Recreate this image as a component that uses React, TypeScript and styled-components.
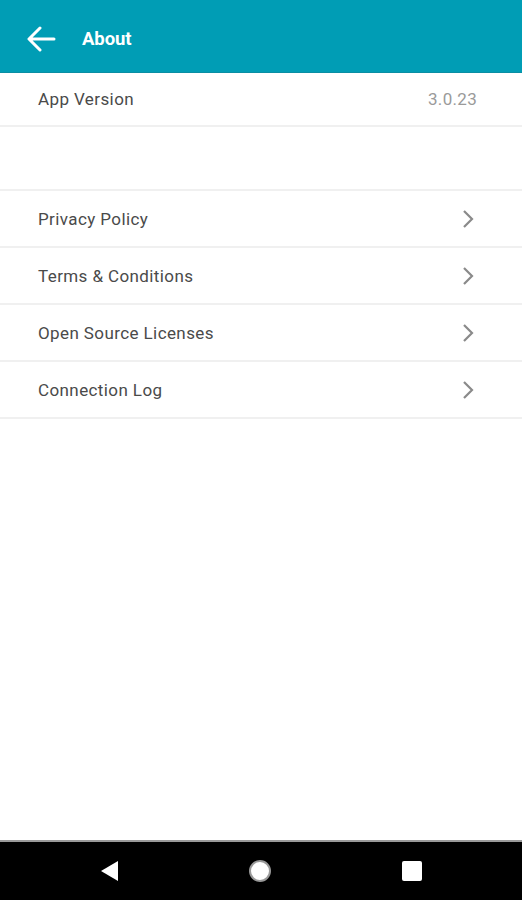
import React from "react";
import styled, { createGlobalStyle } from "styled-components";

const Global = createGlobalStyle`
  html, body { margin: 0; padding: 0; background: #fff; }
  body { font-family: Roboto, "Noto Sans", sans-serif; }
`;

const Screen = styled.div`
  width: 522px;
  height: 900px;
  display: flex;
  flex-direction: column;
  background: #fff;
`;

const AppBar = styled.header`
  height: 73px;
  background: #009db5;
  display: flex;
  align-items: center;
  padding: 5px 0 0 26px;
  box-sizing: border-box;
  border-bottom: 1px solid #0a8ea3;
`;

const BackButton = styled.div`
  width: 30px;
  height: 30px;
  display: flex;
  align-items: center;
  justify-content: center;
  margin-right: 26px;
`;

const Title = styled.h1`
  margin: 0;
  color: #fff;
  font-size: 18.5px;
  font-weight: 700;
  letter-spacing: -0.1px;
`;

const Content = styled.main`
  flex: 1;
  display: flex;
  flex-direction: column;
`;

const Row = styled.div<{ $h: number }>`
  height: ${(p) => p.$h}px;
  display: flex;
  align-items: center;
  justify-content: space-between;
  padding: 0 47px 0 38px;
  border-bottom: 2px solid #f0f0f0;
  box-sizing: border-box;
`;

const Label = styled.span`
  font-size: 17px;
  letter-spacing: 0.4px;
  color: #4a4a4a;
`;

const Value = styled.span`
  font-size: 17px;
  letter-spacing: 0.3px;
  color: #9a9a9a;
  margin-right: -2px;
`;

const Spacer = styled.div`
  height: 62px;
  border-bottom: 2px solid #f0f0f0;
`;

const NavBar = styled.nav`
  height: 60px;
  background: #000;
  border-top: 2px solid #9a9a9a;
  display: flex;
  align-items: center;
  gap: 130px;
  padding-left: 100px;
  box-sizing: border-box;
`;

const Chevron = () => (
  <svg width="14" height="20" viewBox="0 0 14 20">
    <path d="M3 2 L11 10 L3 18" fill="none" stroke="#8a8a8a" strokeWidth="2.2" />
  </svg>
);

const items = ["Privacy Policy", "Terms & Conditions", "Open Source Licenses", "Connection Log"];

export default function App() {
  return (
    <Screen>
      <Global />
      <AppBar>
        <BackButton>
          <svg width="30" height="26" viewBox="0 0 30 26">
            <path d="M28 13 H4 M14 2 L3 13 L14 24" fill="none" stroke="#fff" strokeWidth="3" strokeLinecap="round" strokeLinejoin="round" />
          </svg>
        </BackButton>
        <Title>About</Title>
      </AppBar>
      <Content>
        <Row $h={54}>
          <Label>App Version</Label>
          <Value>3.0.23</Value>
        </Row>
        <Spacer />
        {items.map((t) => (
          <Row key={t} $h={57}>
            <Label>{t}</Label>
            <Chevron />
          </Row>
        ))}
      </Content>
      <NavBar>
        <svg width="18" height="22" viewBox="0 0 18 22">
          <path d="M18 1 L18 21 L1 11 Z" fill="#fff" />
        </svg>
        <svg width="24" height="24" viewBox="0 0 24 24">
          <circle cx="12" cy="12" r="10" fill="#fff" stroke="#999" strokeWidth="2" />
        </svg>
        <svg width="20" height="20" viewBox="0 0 20 20">
          <rect x="0" y="0" width="20" height="20" rx="2" fill="#fff" />
        </svg>
      </NavBar>
    </Screen>
  );
}
